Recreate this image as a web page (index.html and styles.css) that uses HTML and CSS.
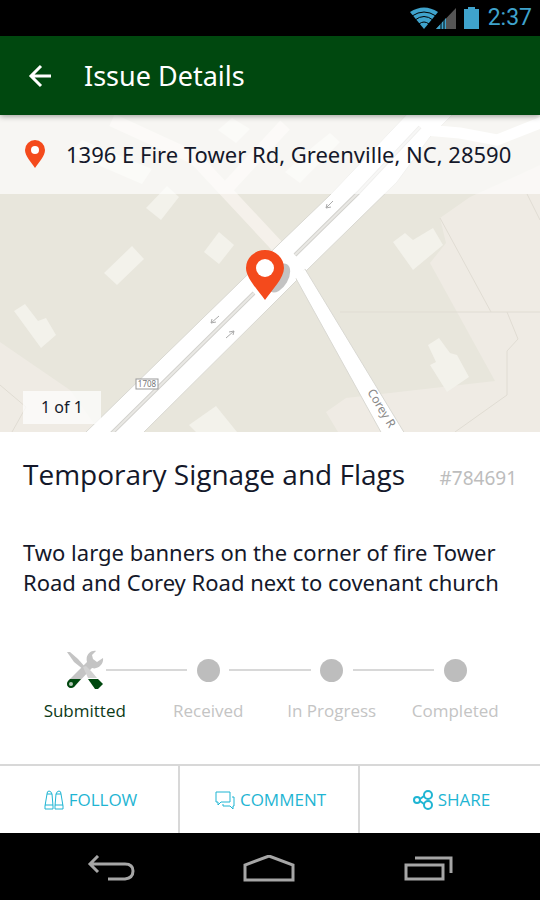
FILE: index.html
```
<!DOCTYPE html>
<html lang="en">
<head>
  <meta charset="UTF-8">
  <title>Issue Details</title>
  <meta name="viewport" content="width=device-width, initial-scale=1.0">
  <link rel="stylesheet" href="styles.css">
</head>
<body>

<div class="status-bar">
  <svg width="70" height="24" viewBox="0 0 70 24">
    <path d="M0 6Q14-3 28 6L14 23Z" fill="#3fa3cc"/>
    <path d="M2 10Q14 2 26 10M5 14Q14 7 23 14M9 18Q14 14 19 18" fill="none" stroke="#000" stroke-width="1"/>
    <path d="M26 23L46 2V23Z" fill="#555"/>
    <path d="M26 23L36 12V23Z" fill="#3fa3cc"/>
    <path d="M31 15V23M34 12V23" stroke="#000" stroke-width="1"/>
    <path d="M54 3H58V1H65V3H69V23H54Z" fill="#3fa3cc"/>
  </svg>
  <span class="clock">2:37</span>
</div>

<header class="app-bar">
  <button class="back-btn" aria-label="Back">
    <svg width="24" height="24" viewBox="0 0 24 24" fill="none" stroke="#fff" stroke-width="3">
      <path d="M23 12H3M13 2L3 12L13 22"/>
    </svg>
  </button>
  <h1>Issue Details</h1>
</header>

<section class="map">
  <svg class="map-img" viewBox="0 0 540 317" preserveAspectRatio="xMidYMid slice">
    <rect width="540" height="317" fill="#e8e6dc"/>
    <!-- parcels -->
    <g fill="#efebe4">
      <path d="M540 50L470 82L440 103L446 128L430 148L495 266L346 283L326 297L338 317H540Z"/>
      <path d="M0 227L70 275L100 317H0Z"/>
    </g>
    <g fill="none" stroke="#e0dcd3">
      <path d="M440 103L491 197M340 197H540M527 79L540 105M507 197L518 224L507 236V280L455 317M0 270L26 292L12 317"/>
    </g>
    <!-- buildings -->
    <g fill="#f3f2eb">
      <path d="M167 71L179 82L161 105L146 93Z"/>
      <path d="M132 131L144 144L117 170L104 158Z"/>
      <path d="M219 117L234 130L219 149L204 137Z"/>
      <path d="M25 189L38 206L46 203L56 220L41 233L14 196Z"/>
      <path d="M216 291L237 317H196L189 310Z"/>
      <path d="M393 127L405 118L413 125L433 113L443 130L413 155Z"/>
      <path d="M428 230L439 223L450 238L457 240L469 262L447 277L430 250L436 247Z"/>
      <path d="M82 25L152 54L142 69L70 38Z"/>
      <path d="M218 15L232 3L250 14L236 28Z"/>
      <path d="M315 30L330 18L340 27L300 68L285 57Z"/>
    </g>
    <!-- side roads -->
    <g fill="none" stroke="#f5f1eb" stroke-width="13">
      <path d="M112 5L195 43L290 145"/>
      <path d="M228 72L285 10"/>
    </g>
    <!-- main roads -->
    <g stroke="#d9d8d2" stroke-width="1" fill="#fff">
      <path d="M84 319L280 128L330 80L410 -4H456L430 22L397 67L307 155L270 192L142 319Z"/>
      <path d="M294 160L305 154L405 319H382Z"/>
    </g>
    <path d="M425 15L460 18L497 25L545 6" fill="none" stroke="#fff" stroke-width="11"/>
    <path d="M278 145L298 137L305 154L297 163L288 166Z" fill="#fff"/>
    <path d="M111 319L254 178M295 140L358 78L420 12" fill="none" stroke="#d3d2ce" stroke-width="4"/>
    <path d="M111 319L254 178M295 140L358 78L420 12" fill="none" stroke="#e9e8e4" stroke-width="2"/>
    <g fill="none" stroke="#aaa" stroke-width="1">
      <path d="M219 201L211 208M212 204L211 208L216 207"/>
      <path d="M226 223L234 216M229 217L234 216L233 220"/>
      <path d="M333 86L326 93M327 89L326 93L331 92"/>
    </g>
    <rect x="136" y="264" width="22" height="10" fill="#fff" stroke="#999"/>
    <text x="147" y="272" class="route-no">1708</text>
    <text class="road-name" transform="translate(367 277) rotate(59)">Corey R</text>
    <!-- marker -->
    <ellipse cx="279" cy="163" rx="9" ry="16" transform="rotate(30 279 163)" fill="#888" opacity=".5"/>
    <path d="M265 185C258 175 246 163 246 153A19 18 0 0 1 284 153C284 163 272 175 265 185Z" fill="#f44a1c"/>
    <circle cx="265" cy="153" r="9" fill="#fff"/>
  </svg>
  <div class="address">
    <svg width="22" height="28" viewBox="0 0 22 28">
      <path d="M11 28C7 22 1 16 1 10A10 10 0 0 1 21 10C21 16 15 22 11 28Z" fill="#f44a1c"/>
      <circle cx="11" cy="10" r="4" fill="#fff"/>
    </svg>
    <span>1396 E Fire Tower Rd, Greenville, NC, 28590</span>
  </div>
  <div class="photo-count">1 of 1</div>
</section>

<main class="details">
  <div class="title-row">
    <h2>Temporary Signage and Flags</h2>
    <span class="issue-no">#784691</span>
  </div>
  <p class="description">Two large banners on the corner of fire Tower Road and Corey Road next to covenant church</p>

  <ol class="steps">
    <li class="step current">
      <div class="track">
        <span class="marker">
          <svg width="38" height="40" viewBox="0 0 38 40">
            <path d="M1 2L4 2L12 9L20 18L18 20L8 12Z" fill="#c4c4c4"/>
            <path d="M30 1C25 0 19 5 21 12L2 31C-1 35 3 40 8 37L26 18C32 20 38 14 37 8L31 12L27 9L26 5Z" fill="#c4c4c4"/>
            <path d="M17 17L20 16L26 22L31 28H22Z" fill="#d2d2d2"/>
            <path d="M22 29H32L37 34L32 39H29Z" fill="#00480f"/>
            <path d="M4 29L2 31C-1 35 3 40 8 37L15 29Z" fill="#00480f"/>
            <circle cx="5" cy="34" r="2" fill="#b5c9b8"/>
          </svg>
        </span>
      </div>
      <span class="label">Submitted</span>
    </li>
    <li class="step">
      <div class="track"><span class="marker"><span class="dot"></span></span></div>
      <span class="label">Received</span>
    </li>
    <li class="step">
      <div class="track"><span class="marker"><span class="dot"></span></span></div>
      <span class="label">In Progress</span>
    </li>
    <li class="step">
      <div class="track"><span class="marker"><span class="dot"></span></span></div>
      <span class="label">Completed</span>
    </li>
  </ol>
</main>

<div class="actions">
  <button>
    <svg width="20" height="20" viewBox="0 0 20 20">
      <path d="M1 16L3 4Q3 1 5 1T8 4L9 16V19H1ZM11 16L12 4Q13 1 15 1T17 4L19 16V19H11ZM1 15H9M11 15H19M3 4H8M12 4H17"/>
    </svg>
    FOLLOW
  </button>
  <button>
    <svg width="20" height="20" viewBox="0 0 20 20">
      <path d="M1 2H15V12H6L3 15V12H1ZM17 7H19V16H18V19L15 16H8V14"/>
    </svg>
    COMMENT
  </button>
  <button>
    <svg width="20" height="20" viewBox="0 0 20 20" class="share-icon">
      <circle cx="4" cy="10" r="3"/>
      <circle cx="15" cy="5" r="4"/>
      <circle cx="15" cy="15" r="4"/>
      <path d="M7 9L11 6M7 11L11 14"/>
    </svg>
    SHARE
  </button>
</div>

<nav class="nav-bar">
  <button aria-label="Back">
    <svg width="48" height="28" viewBox="0 0 48 28">
      <path d="M11 1L3 9L11 17M3 9H38Q46 9 46 16T38 24H21"/>
    </svg>
  </button>
  <button aria-label="Home">
    <svg width="54" height="28" viewBox="0 0 54 28">
      <path d="M3 25V10L27 1L51 10V25Z"/>
    </svg>
  </button>
  <button aria-label="Recent apps">
    <svg width="50" height="28" viewBox="0 0 50 28">
      <path d="M3 10H40V24H3ZM12 3H48V18"/>
    </svg>
  </button>
</nav>

</body>
</html>
```
FILE: styles.css
```
* { box-sizing: border-box; }
body {
  font-family: 'Noto Sans', 'Open Sans', sans-serif;
  margin: 0;
  min-height: 100vh;
  display: flex;
  flex-direction: column;
  background: #fff;
  color: #14182a;
}

button {
  font-family: inherit;
  background: none;
  border: none;
  padding: 0;
  cursor: pointer;
}

svg { display: block; }

.status-bar {
  display: flex;
  justify-content: flex-end;
  align-items: center;
  gap: 8px;
  height: 36px;
  padding: 0 8px;
  background: #000;
}

.clock {
  font-family: Roboto, sans-serif;
  font-size: 23px;
  line-height: 36px;
  color: #3fa3cc;
}

.app-bar {
  display: flex;
  align-items: center;
  gap: 32px;
  height: 79px;
  padding: 0 28px;
  background: #00480f;
  box-shadow: 0 1px 6px rgba(0,0,0,0.4);
  position: relative;
  z-index: 1;
}

.app-bar h1 {
  margin: 0;
  font-size: 27px;
  font-weight: 400;
  color: #fff;
}

.map {
  position: relative;
  height: 317px;
}

.map-img {
  width: 100%;
  height: 100%;
}

.route-no {
  font-size: 8px;
  text-anchor: middle;
  fill: #777;
}

.road-name {
  font-size: 12px;
  fill: #888;
}

.address {
  position: absolute;
  top: 0;
  left: 0;
  right: 0;
  display: flex;
  align-items: center;
  gap: 20px;
  height: 79px;
  padding: 0 24px 2px;
  background: rgba(255,255,255,0.65);
  font-size: 22px;
  white-space: nowrap;
}

.photo-count {
  position: absolute;
  left: 23px;
  bottom: 8px;
  padding: 0 18px;
  background: rgba(255,255,255,0.7);
  font-size: 16px;
  line-height: 33px;
}

.details {
  flex: 1;
  padding: 24px 23px 0;
}

.title-row {
  display: flex;
  justify-content: space-between;
  align-items: baseline;
}

.title-row h2 {
  margin: 0;
  font-family: 'Open Sans', sans-serif;
  font-size: 28px;
  font-weight: 400;
  line-height: 36px;
}

.issue-no {
  font-size: 19px;
  line-height: 24px;
  color: #bdbdbd;
}

.description {
  margin: 45px 0 0;
  font-size: 22px;
  line-height: 30px;
}

.steps {
  display: grid;
  grid-template-columns: repeat(4, 1fr);
  list-style: none;
  margin: 53px 0 0;
  padding: 0;
}

.track {
  display: flex;
  align-items: center;
  height: 40px;
}

.track::before,
.track::after {
  content: "";
  flex: 1;
  height: 2px;
  background: #d8d8d8;
}

.step:first-child .track::before,
.step:last-child .track::after { background: none; }

.marker {
  display: flex;
  justify-content: center;
  width: 42px;
}

.dot {
  width: 23px;
  height: 23px;
  border-radius: 50%;
  background: #bdbdbd;
}

.label {
  display: block;
  margin-top: 9px;
  text-align: center;
  font-family: 'Open Sans', sans-serif;
  font-size: 17px;
  line-height: 24px;
  color: #c4c4c4;
}

.current .label { color: #0c3a17; }

.actions {
  display: grid;
  grid-template-columns: repeat(3, 1fr);
  border-top: 2px solid #d8d8d8;
}

.actions button {
  display: flex;
  justify-content: center;
  align-items: center;
  gap: 5px;
  height: 67px;
  padding-left: 3px;
  font-family: 'Open Sans', sans-serif;
  font-size: 17px;
  color: #1fb5d3;
}

.actions button:not(:last-child) { border-right: 2px solid #d8d8d8; }

.actions svg {
  fill: none;
  stroke: #1fb5d3;
  stroke-width: 1;
}

.actions .share-icon { stroke-width: 2; }

.nav-bar {
  display: flex;
  justify-content: center;
  align-items: center;
  gap: 107px;
  height: 67px;
  padding-top: 4px;
  background: #000;
}

.nav-bar svg {
  fill: none;
  stroke: #a6a6a6;
  stroke-width: 3;
}
```
